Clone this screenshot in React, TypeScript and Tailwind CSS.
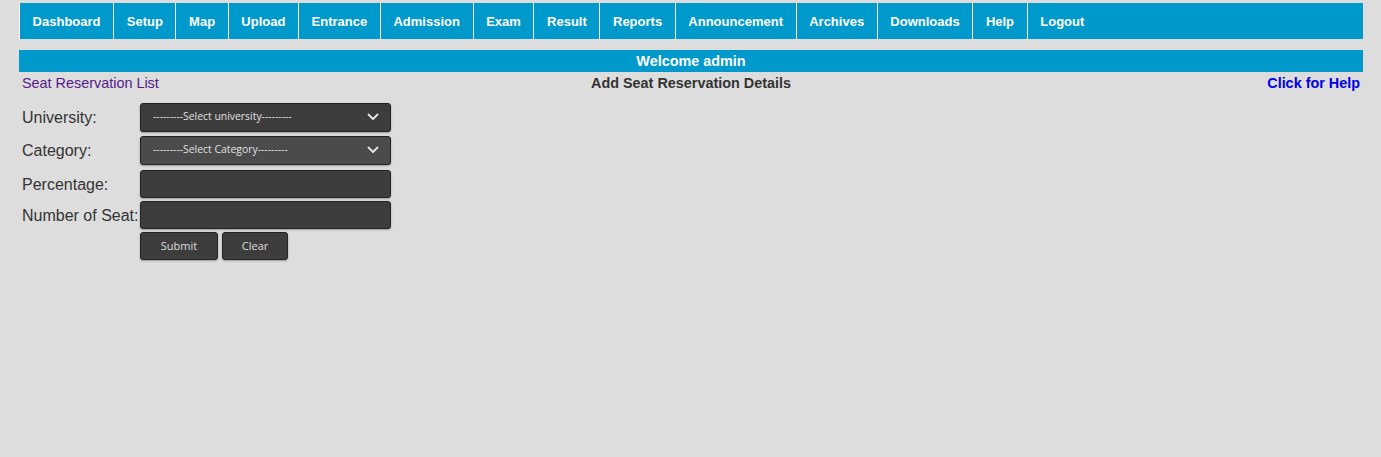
import React from "react";

const navItems = [
  "Dashboard",
  "Setup",
  "Map",
  "Upload",
  "Entrance",
  "Admission",
  "Exam",
  "Result",
  "Reports",
  "Announcement",
  "Archives",
  "Downloads",
  "Help",
  "Logout",
];

function Chevron() {
  return (
    <svg width="12" height="8" viewBox="0 0 12 8" className="absolute right-[11px] top-1/2 -translate-y-1/2">
      <path d="M1.5 1.5 L6 6 L10.5 1.5" fill="none" stroke="#e5e5e5" strokeWidth="1.8" strokeLinecap="round" strokeLinejoin="round" />
    </svg>
  );
}

function SelectBox({ text, light }: { text: string; light?: boolean }) {
  return (
    <div
      className={`relative w-[251px] h-[29px] rounded-[3px] border border-[#232323] ${light ? "bg-[#4b4b4b]" : "bg-[#3d3d3d]"} flex items-center pl-[12px] text-[10.4px] text-[#e0e0e0] shadow-[0_1px_2px_rgba(0,0,0,0.3)]`}
      style={{ fontFamily: '"Open Sans", "Noto Sans", sans-serif' }}
    >
      {text}
      <Chevron />
    </div>
  );
}

function InputBox() {
  return <div className="w-[251px] h-[28px] rounded-[3px] border border-[#232323] bg-[#3d3d3d] shadow-[0_1px_2px_rgba(0,0,0,0.3)]" />;
}

export default function App() {
  return (
    <div className="min-h-[457px] w-full bg-[#dddddd] pt-[3px]" style={{ fontFamily: '"Liberation Sans", Arial, sans-serif' }}>
      <div className="ml-[19px] w-[1344px]">
        <ul className="flex h-[36px] bg-[#0099cc]">
          {navItems.map((n) => (
            <li
              key={n}
              className="flex items-center border-l border-white px-[12.62px] pt-[2px] text-[13px] font-bold text-white"
            >
              {n}
            </li>
          ))}
        </ul>
        <div className="mt-[11px] flex h-[22px] items-center justify-center bg-[#0099cc] pt-[2px] text-[14.4px] font-bold text-white">
          Welcome admin
        </div>
        <div className="flex h-[21px] items-center justify-between px-[3px] pt-[2px] text-[14.4px]">
          <span className="w-[200px] text-[#551a8b]">Seat Reservation List</span>
          <span className="font-bold text-[#333333]">Add Seat Reservation Details</span>
          <span className="w-[200px] text-right font-bold text-[#0000ee]">Click for Help</span>
        </div>
        <div className="mt-[9px] flex flex-col pl-[3px] text-[16px] text-[#333333]">
          <div className="flex h-[30px] items-center">
            <span className="w-[118px] pt-[2px]">University:</span>
            <SelectBox text="---------Select university---------" />
          </div>
          <div className="mt-[3px] flex h-[30px] items-center">
            <span className="w-[118px] pt-[2px]">Category:</span>
            <SelectBox text="---------Select Category---------" light />
          </div>
          <div className="mt-[5px] flex h-[28px] items-center">
            <span className="w-[118px] pt-[1px]">Percentage:</span>
            <InputBox />
          </div>
          <div className="mt-[3px] flex h-[28px] items-center">
            <span className="w-[118px] pt-[1px]">Number of Seat:</span>
            <InputBox />
          </div>
          <div className="mt-[3px] flex h-[28px] items-center gap-[4px] pl-[118px]" style={{ fontFamily: '"Open Sans", "Noto Sans", sans-serif' }}>
            <div className="flex h-[28px] w-[78px] items-center justify-center rounded-[3px] border border-[#232323] bg-[#3d3d3d] text-[11px] text-[#dddddd] shadow-[0_1px_2px_rgba(0,0,0,0.3)]">
              Submit
            </div>
            <div className="flex h-[28px] w-[66px] items-center justify-center rounded-[3px] border border-[#232323] bg-[#3d3d3d] text-[11px] text-[#dddddd] shadow-[0_1px_2px_rgba(0,0,0,0.3)]">
              Clear
            </div>
          </div>
        </div>
      </div>
    </div>
  );
}
